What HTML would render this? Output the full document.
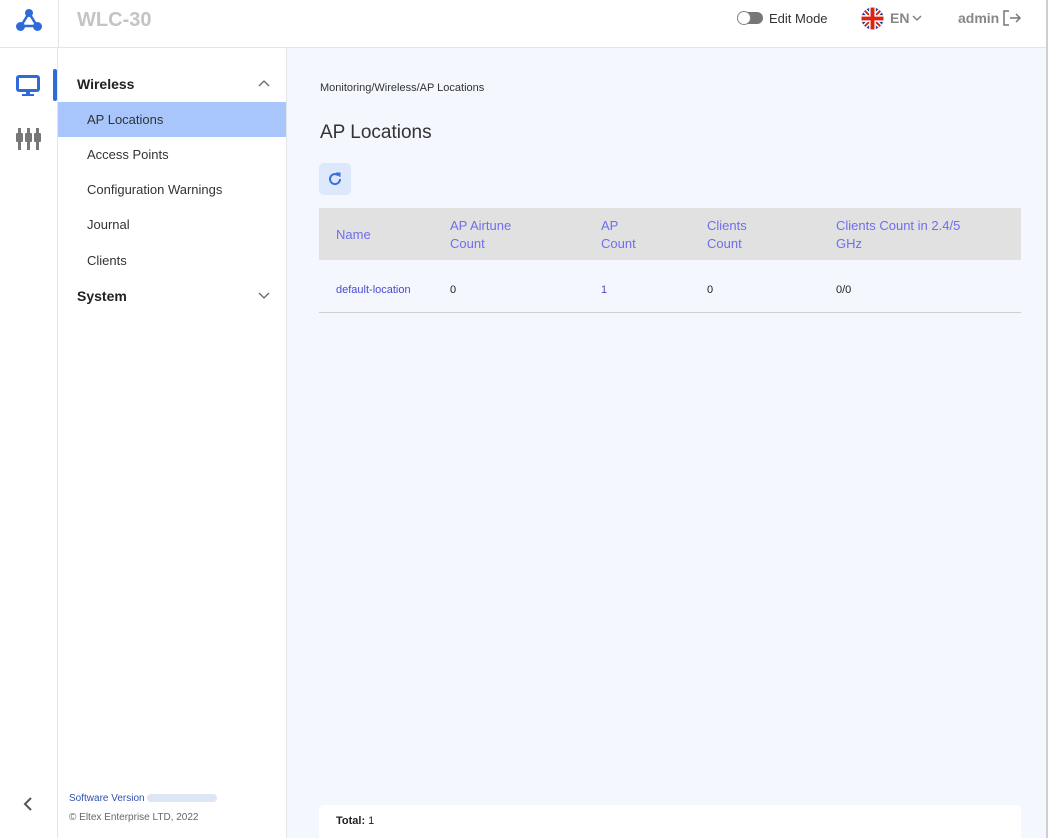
<!DOCTYPE html>
<html><head><meta charset="utf-8"><style>
*{box-sizing:border-box;margin:0;padding:0}
html,body{width:1048px;height:838px;overflow:hidden}
body{font-family:"Liberation Sans",sans-serif;background:#f4f7fe;position:relative;color:#222}
.hdr{position:absolute;left:0;top:0;width:1048px;height:48px;background:#fff;border-bottom:1px solid #e2e5ea}
.rail{position:absolute;left:0;top:0;width:58px;height:838px;background:#fff;border-right:1px solid #e2e5ea}
.side{position:absolute;left:58px;top:48px;width:229px;height:790px;background:#fff;border-right:1px solid #e2e5ea}
.abs{position:absolute}
.item{position:absolute;left:0;width:228px;height:35px;line-height:35px;padding-left:29px;font-size:13px;color:#333}
</style></head><body>
<div class="rail"></div>
<div class="hdr"></div>
<div class="abs" style="left:58px;top:0;width:1px;height:48px;background:#e2e5ea"></div>
<svg class="abs" style="left:15px;top:7px" width="28" height="26" viewBox="0 0 28 26"><path d="M14 6 L6 19 L22 19 Z" fill="none" stroke="#2f6ad9" stroke-width="2.5"/><circle cx="14" cy="6" r="4" fill="#2f6ad9"/><circle cx="5.5" cy="19.5" r="4.5" fill="#2f6ad9"/><circle cx="22.5" cy="19.5" r="4.5" fill="#2f6ad9"/></svg>
<div class="abs" style="left:77px;top:9px;font-size:20px;font-weight:bold;color:#c4c4c4">WLC-30</div>
<div class="abs" style="left:737px;top:12px;width:26px;height:12px;border-radius:6px;background:#777"></div>
<div class="abs" style="left:737px;top:11px;width:14px;height:14px;border-radius:50%;background:#fff;border:1px solid #888"></div>
<div class="abs" style="left:769px;top:11px;font-size:13px;color:#333">Edit Mode</div>
<svg class="abs" style="left:861px;top:7px" width="23" height="23" viewBox="0 0 24 24"><defs><clipPath id="c"><circle cx="12" cy="12" r="11.5"/></clipPath></defs><g clip-path="url(#c)"><rect width="24" height="24" fill="#1e3a8a"/><path d="M0 0L24 24M24 0L0 24" stroke="#fff" stroke-width="5"/><path d="M0 0L24 24M24 0L0 24" stroke="#d21" stroke-width="2"/><path d="M12 0V24M0 12H24" stroke="#fff" stroke-width="7"/><path d="M12 0V24M0 12H24" stroke="#d21" stroke-width="4"/></g></svg>
<div class="abs" style="left:890px;top:10px;font-size:14px;font-weight:bold;color:#888">EN</div>
<svg class="abs" style="left:912px;top:14px" width="10" height="8"><path d="M1 2L5 6L9 2" fill="none" stroke="#777" stroke-width="1.3"/></svg>
<div class="abs" style="left:958px;top:10px;font-size:14px;font-weight:bold;color:#888">admin</div>
<svg class="abs" style="left:1002px;top:9px" width="20" height="18"><path d="M7 2H2V16H7M8 9H18M14 5L18 9L14 13" fill="none" stroke="#777" stroke-width="1.5"/></svg>
<svg class="abs" style="left:16px;top:75px" width="24" height="22"><rect x="1.5" y="1.5" width="21" height="14" rx="1.5" fill="none" stroke="#2f6ad9" stroke-width="3"/><rect x="10" y="16" width="4" height="3" fill="#2f6ad9"/><rect x="6" y="19" width="12" height="2" fill="#2f6ad9"/></svg>
<div class="abs" style="left:53px;top:69px;width:4px;height:32px;border-radius:2px;background:#2f6ad9"></div>
<svg class="abs" style="left:16px;top:128px" width="25" height="25" fill="#777"><rect x="2" y="0" width="3" height="6"/><rect x="0" y="5" width="7" height="9" rx="1"/><rect x="2" y="13" width="3" height="9"/><rect x="11" y="0" width="3" height="6"/><rect x="9" y="5" width="7" height="9" rx="1"/><rect x="11" y="13" width="3" height="9"/><rect x="20" y="0" width="3" height="6"/><rect x="18" y="5" width="7" height="9" rx="1"/><rect x="20" y="13" width="3" height="9"/></svg>
<svg class="abs" style="left:23px;top:797px" width="10" height="14"><path d="M8 1L2 7L8 13" fill="none" stroke="#555" stroke-width="2"/></svg>
<div class="side">
<div class="abs" style="left:19px;top:28px;font-size:14px;font-weight:bold;color:#222">Wireless</div>
<svg class="abs" style="left:200px;top:32px" width="12" height="8"><path d="M1 6L6 1L11 6" fill="none" stroke="#666" stroke-width="1.3"/></svg>
<div class="item" style="top:54px;background:#a8c6fc">AP Locations</div>
<div class="item" style="top:89px">Access Points</div>
<div class="item" style="top:124px">Configuration Warnings</div>
<div class="item" style="top:159px">Journal</div>
<div class="item" style="top:195px">Clients</div>
<div class="abs" style="left:19px;top:240px;font-size:14px;font-weight:bold;color:#222">System</div>
<svg class="abs" style="left:200px;top:244px" width="12" height="8"><path d="M1 1L6 6L11 1" fill="none" stroke="#666" stroke-width="1.3"/></svg>
<div class="abs" style="left:11px;top:745px;font-size:10px;color:#2f50b0">Software Version <span style="display:inline-block;width:70px;height:8px;background:#dde6f5;border-radius:4px;vertical-align:middle"></span></div>
<div class="abs" style="left:11px;top:764px;font-size:10px;color:#666">© Eltex Enterprise LTD, 2022</div>
</div>
<div class="abs" style="left:320px;top:82px;font-size:11px;color:#333">Monitoring/Wireless/AP Locations</div>
<div class="abs" style="left:320px;top:122px;font-size:19px;color:#333">AP Locations</div>
<div class="abs" style="left:319px;top:163px;width:32px;height:32px;border-radius:5px;background:#dde8fd"></div>
<svg class="abs" style="left:328px;top:172px" width="14" height="14"><path d="M12 7A5 5 0 1 1 10.5 3.5" fill="none" stroke="#3a6fd8" stroke-width="2"/><path d="M8 1H12V5" fill="#3a6fd8" stroke="#3a6fd8" stroke-width="1"/></svg>
<div class="abs" style="left:319px;top:208px;width:702px;height:52px;background:#e1e1e1"></div>
<div class="abs" style="left:336px;top:227px;font-size:13px;color:#6e6ef0">Name</div>
<div class="abs" style="left:450px;top:217px;font-size:13px;line-height:18px;color:#6e6ef0">AP Airtune<br>Count</div>
<div class="abs" style="left:601px;top:217px;font-size:13px;line-height:18px;color:#6e6ef0">AP<br>Count</div>
<div class="abs" style="left:707px;top:217px;font-size:13px;line-height:18px;color:#6e6ef0">Clients<br>Count</div>
<div class="abs" style="left:836px;top:217px;font-size:13px;line-height:18px;color:#6e6ef0">Clients Count in 2.4/5<br>GHz</div>
<div class="abs" style="left:336px;top:284px;font-size:11px;color:#4a4ad0">default-location</div>
<div class="abs" style="left:450px;top:284px;font-size:11px;color:#222">0</div>
<div class="abs" style="left:601px;top:284px;font-size:11px;color:#4a4ad0">1</div>
<div class="abs" style="left:707px;top:284px;font-size:11px;color:#222">0</div>
<div class="abs" style="left:836px;top:284px;font-size:11px;color:#222">0/0</div>
<div class="abs" style="left:319px;top:312px;width:702px;height:1px;background:#d0d0d0"></div>
<div class="abs" style="left:319px;top:805px;width:702px;height:33px;background:#fff;border-radius:5px 5px 0 0"></div>
<div class="abs" style="left:336px;top:815px;font-size:11px;color:#222"><b>Total:</b> 1</div>
<div class="abs" style="left:1046px;top:0;width:2px;height:838px;background:#cfcfcf"></div>
</body></html>
